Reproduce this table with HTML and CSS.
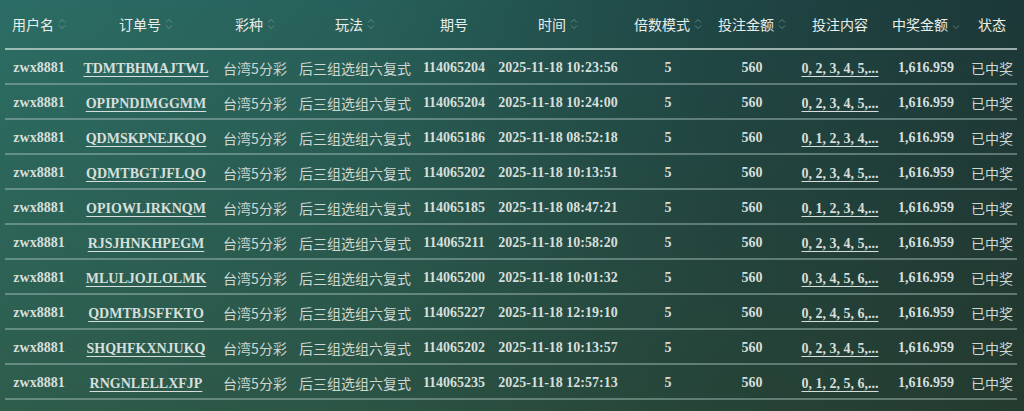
FILE: index.html
```html
<!DOCTYPE html>
<html lang="zh">
<head>
<meta charset="utf-8">
<title>中奖记录</title>
<link rel="stylesheet" href="styles.css">
</head>
<body>
<div class="page">
<table class="records">
<colgroup>
<col class="c1"><col class="c2"><col class="c3"><col class="c4"><col class="c5"><col class="c6"><col class="c7"><col class="c8"><col class="c9"><col class="c10"><col class="c11">
</colgroup>
<thead>
<tr>
<th><span class="th-in">用户名<svg class="sort" viewBox="0 0 8 14"><path d="M1 5.5 L4 2.5 L7 5.5 M1 8.5 L4 11.5 L7 8.5"/></svg></span></th>
<th><span class="th-in">订单号<svg class="sort" viewBox="0 0 8 14"><path d="M1 5.5 L4 2.5 L7 5.5 M1 8.5 L4 11.5 L7 8.5"/></svg></span></th>
<th><span class="th-in">彩种<svg class="sort" viewBox="0 0 8 14"><path d="M1 5.5 L4 2.5 L7 5.5 M1 8.5 L4 11.5 L7 8.5"/></svg></span></th>
<th><span class="th-in">玩法<svg class="sort" viewBox="0 0 8 14"><path d="M1 5.5 L4 2.5 L7 5.5 M1 8.5 L4 11.5 L7 8.5"/></svg></span></th>
<th><span class="th-in">期号</span></th>
<th><span class="th-in">时间<svg class="sort" viewBox="0 0 8 14"><path d="M1 5.5 L4 2.5 L7 5.5 M1 8.5 L4 11.5 L7 8.5"/></svg></span></th>
<th><span class="th-in">倍数模式<svg class="sort" viewBox="0 0 8 14"><path d="M1 5.5 L4 2.5 L7 5.5 M1 8.5 L4 11.5 L7 8.5"/></svg></span></th>
<th><span class="th-in">投注金额<svg class="sort" viewBox="0 0 8 14"><path d="M1 5.5 L4 2.5 L7 5.5 M1 8.5 L4 11.5 L7 8.5"/></svg></span></th>
<th><span class="th-in">投注内容</span></th>
<th><span class="th-in">中奖金额<svg class="sort" viewBox="0 0 8 14"><path d="M1 8.5 L4 11.5 L7 8.5"/></svg></span></th>
<th><span class="th-in">状态</span></th>
</tr>
</thead>
<tbody>
<tr><td class="lat">zwx8881</td><td><a class="lnk">TDMTBHMAJTWL</a></td><td class="cn">台湾5分彩</td><td class="cn">后三组选组六复式</td><td class="lat">114065204</td><td class="lat">2025-11-18 10:23:56</td><td class="lat">5</td><td class="lat">560</td><td><a class="lnk">0, 2, 3, 4, 5,...</a></td><td class="lat">1,616.959</td><td class="cn">已中奖</td></tr>
<tr><td class="lat">zwx8881</td><td><a class="lnk">OPIPNDIMGGMM</a></td><td class="cn">台湾5分彩</td><td class="cn">后三组选组六复式</td><td class="lat">114065204</td><td class="lat">2025-11-18 10:24:00</td><td class="lat">5</td><td class="lat">560</td><td><a class="lnk">0, 2, 3, 4, 5,...</a></td><td class="lat">1,616.959</td><td class="cn">已中奖</td></tr>
<tr><td class="lat">zwx8881</td><td><a class="lnk">QDMSKPNEJKQO</a></td><td class="cn">台湾5分彩</td><td class="cn">后三组选组六复式</td><td class="lat">114065186</td><td class="lat">2025-11-18 08:52:18</td><td class="lat">5</td><td class="lat">560</td><td><a class="lnk">0, 1, 2, 3, 4,...</a></td><td class="lat">1,616.959</td><td class="cn">已中奖</td></tr>
<tr><td class="lat">zwx8881</td><td><a class="lnk">QDMTBGTJFLQO</a></td><td class="cn">台湾5分彩</td><td class="cn">后三组选组六复式</td><td class="lat">114065202</td><td class="lat">2025-11-18 10:13:51</td><td class="lat">5</td><td class="lat">560</td><td><a class="lnk">0, 2, 3, 4, 5,...</a></td><td class="lat">1,616.959</td><td class="cn">已中奖</td></tr>
<tr><td class="lat">zwx8881</td><td><a class="lnk">OPIOWLIRKNQM</a></td><td class="cn">台湾5分彩</td><td class="cn">后三组选组六复式</td><td class="lat">114065185</td><td class="lat">2025-11-18 08:47:21</td><td class="lat">5</td><td class="lat">560</td><td><a class="lnk">0, 1, 2, 3, 4,...</a></td><td class="lat">1,616.959</td><td class="cn">已中奖</td></tr>
<tr><td class="lat">zwx8881</td><td><a class="lnk">RJSJHNKHPEGM</a></td><td class="cn">台湾5分彩</td><td class="cn">后三组选组六复式</td><td class="lat">114065211</td><td class="lat">2025-11-18 10:58:20</td><td class="lat">5</td><td class="lat">560</td><td><a class="lnk">0, 2, 3, 4, 5,...</a></td><td class="lat">1,616.959</td><td class="cn">已中奖</td></tr>
<tr><td class="lat">zwx8881</td><td><a class="lnk">MLULJOJLOLMK</a></td><td class="cn">台湾5分彩</td><td class="cn">后三组选组六复式</td><td class="lat">114065200</td><td class="lat">2025-11-18 10:01:32</td><td class="lat">5</td><td class="lat">560</td><td><a class="lnk">0, 3, 4, 5, 6,...</a></td><td class="lat">1,616.959</td><td class="cn">已中奖</td></tr>
<tr><td class="lat">zwx8881</td><td><a class="lnk">QDMTBJSFFKTO</a></td><td class="cn">台湾5分彩</td><td class="cn">后三组选组六复式</td><td class="lat">114065227</td><td class="lat">2025-11-18 12:19:10</td><td class="lat">5</td><td class="lat">560</td><td><a class="lnk">0, 2, 4, 5, 6,...</a></td><td class="lat">1,616.959</td><td class="cn">已中奖</td></tr>
<tr><td class="lat">zwx8881</td><td><a class="lnk">SHQHFKXNJUKQ</a></td><td class="cn">台湾5分彩</td><td class="cn">后三组选组六复式</td><td class="lat">114065202</td><td class="lat">2025-11-18 10:13:57</td><td class="lat">5</td><td class="lat">560</td><td><a class="lnk">0, 2, 3, 4, 5,...</a></td><td class="lat">1,616.959</td><td class="cn">已中奖</td></tr>
<tr><td class="lat">zwx8881</td><td><a class="lnk">RNGNLELLXFJP</a></td><td class="cn">台湾5分彩</td><td class="cn">后三组选组六复式</td><td class="lat">114065235</td><td class="lat">2025-11-18 12:57:13</td><td class="lat">5</td><td class="lat">560</td><td><a class="lnk">0, 1, 2, 5, 6,...</a></td><td class="lat">1,616.959</td><td class="cn">已中奖</td></tr>
</tbody>
</table>
</div>
</body>
</html>
```

FILE: styles.css
```css
html, body {
  margin: 0;
  padding: 0;
  height: 100%;
}
body {
  width: 1024px;
  height: 411px;
  overflow: hidden;
  background:
    linear-gradient(to bottom, rgba(52, 62, 30, 0) 0%, rgba(52, 62, 30, 0.35) 100%),
    linear-gradient(to right, #2b6d65 0%, #27605a 35%, #1f4645 70%, #1c3838 100%);
  font-family: "Liberation Serif", "Noto Sans CJK SC", serif;
  color: #d6dfdb;
}
.page {
  padding: 0 7px 0 5px;
}
.records {
  width: 1012px;
  border-collapse: collapse;
  table-layout: fixed;
}
.c1 { width: 68px; }
.c2 { width: 146px; }
.c3 { width: 72px; }
.c4 { width: 128px; }
.c5 { width: 70px; }
.c6 { width: 138px; }
.c7 { width: 82px; }
.c8 { width: 86px; }
.c9 { width: 90px; }
.c10 { width: 82px; }
.c11 { width: 50px; }

.records th {
  height: 48px;
  padding: 0;
  text-align: center;
  font-family: "Noto Sans CJK SC", sans-serif;
  font-weight: 400;
  font-size: 14px;
  color: #e8eeec;
  border-bottom: 2px solid rgba(196, 214, 210, 0.75);
  white-space: nowrap;
}
.th-in {
  display: inline-flex;
  align-items: center;
  gap: 4px;
}
.sort {
  width: 8px;
  height: 14px;
  fill: none;
  stroke: rgba(150, 180, 175, 0.5);
  stroke-width: 1;
}
.records td {
  height: 31px;
  padding: 2px 0 0;
  text-align: center;
  white-space: nowrap;
  overflow: hidden;
  border-bottom: 2px solid rgba(170, 195, 190, 0.45);
}
.lat {
  font-family: "Liberation Serif", serif;
  font-weight: 700;
  font-size: 14px;
  color: #d6dfdb;
}
.cn {
  font-family: "Noto Sans CJK SC", sans-serif;
  font-size: 14px;
  font-weight: 400;
  color: #cdd7d3;
}
.lnk {
  font-family: "Liberation Serif", serif;
  font-weight: 700;
  font-size: 14px;
  color: #d6dfdb;
  text-decoration: underline;
  text-underline-offset: 3px;
  text-decoration-thickness: 1px;
}
```
